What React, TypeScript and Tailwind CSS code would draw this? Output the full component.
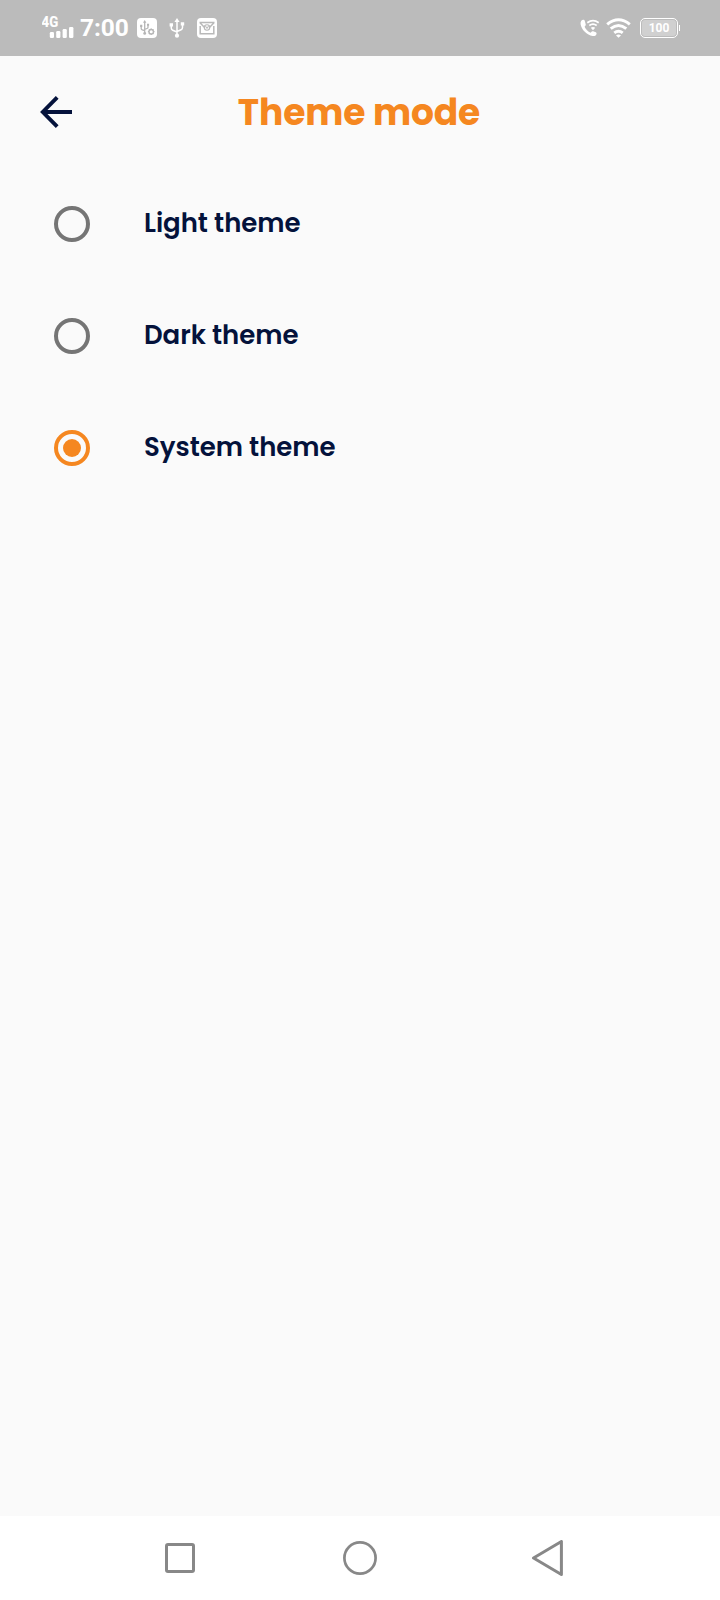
import { useState } from 'react';

function SignalIcon() {
  return (
    <svg width="34" height="56" viewBox="42 0 34 56" fill="#fff">
      <text x="41.6" y="26.8" fontFamily="Roboto, sans-serif" fontWeight="700" fontSize="14" textLength="16.6" lengthAdjust="spacingAndGlyphs" stroke="#fff" strokeWidth="0.2">4G</text>
      <rect x="49.8" y="32" width="4.2" height="6" rx="1.3" />
      <rect x="56.2" y="31" width="4.2" height="7" rx="1.3" />
      <rect x="62.6" y="29" width="4.2" height="9" rx="1.3" />
      <rect x="69" y="27" width="4.4" height="11" rx="1.3" />
    </svg>
  );
}

function UsbDebugIcon() {
  return (
    <svg width="20" height="20" viewBox="0 0 20 20" fill="none" stroke="#b5b5b5" strokeWidth="1.3">
      <rect width="20" height="20" rx="4" fill="#fff" stroke="none" />
      <path d="M7.7 4v11M4.2 8v2.5q0 1 1 1.3l2.5.8M11 7v2.2q0 1-1 1.3l-2.3.8" />
      <path d="M7.7 2 6 4.8h3.4Z" fill="#b5b5b5" stroke="none" />
      <circle cx="7.7" cy="15.4" r="1.4" fill="#b5b5b5" stroke="none" />
      <path d="M3.1 6.8h2.2v2.2H3.1zM10 5.8h2.1v2H10z" fill="#b5b5b5" stroke="none" />
      <circle cx="14.2" cy="13.7" r="2.2" />
      <path d="M14.2 10.4v1M14.2 16v1M10.9 13.7h1M16.5 13.7h1M11.9 11.4l.7.7M15.8 15.3l.7.7M16.5 11.4l-.7.7M12.6 15.3l-.7.7" />
    </svg>
  );
}

function UsbIcon() {
  return (
    <svg width="16" height="20" viewBox="0 0 16 20" fill="none" stroke="#fff" strokeWidth="1.5">
      <path d="M8 3v13M2.3 7v3q0 1.6 1.4 2.2L8 14M13.5 5v4.500q0 1.600-1.400 2.200L8 13.500" />
      <path d="M8 0 5.400 4h5.200ZM.6 5.200h3.400v3.200H.6ZM11.800 4.300h3.400v3.200h-3.400Z" fill="#fff" stroke="none" />
      <circle cx="8" cy="17.700" r="2.100" fill="#fff" stroke="none" />
    </svg>
  );
}

function MailIcon() {
  return (
    <svg width="20" height="20" viewBox="0 0 20 20" fill="none" stroke="#b9b9b9" strokeWidth="1.5">
      <rect width="20" height="20" rx="4" fill="#fff" stroke="none" />
      <path d="M3.2 8v7.800h13.600V8M2.500 4.500h15M3 4.800l4.800 5M17 4.800l-4.800 5" />
      <circle cx="10" cy="9.500" r="2.700" strokeWidth="1.100" />
      <path d="m8.200 7.500 1.800 3 1.800-3" strokeWidth="1" />
    </svg>
  );
}

function CallIcon() {
  return (
    <svg width="20" height="19" viewBox="0 0 20 19" fill="#fff">
      <path d="M3.7.8C1.7.5.2 2.8.6 5.2c.9 5.5 6.3 10.8 12 11.8 2.200.3 4-.8 4-2.600 0-.5-.3-.9-.8-1.100l-2.600-1c-.5-.2-1-.1-1.400.3l-1.200 1.200C8 12.600 5.600 10.200 4.600 7.700L5.500 6.500c.3-.4.4-.8.2-1.300L4.700 1.700C4.500 1.100 4.200.9 3.700.8Z" />
      <path d="M7.300 3.700q5.700-4.200 11.400 0M9.300 6.500q3.700-2.700 7.400 0" fill="none" stroke="#fff" strokeWidth="1.700" />
      <path d="M10.800 8.700q2.200-1.500 4.400 0l-2.200 2.500Z" />
    </svg>
  );
}

function WifiIcon() {
  return (
    <svg width="25" height="20" viewBox="0 0 25 20" fill="none" stroke="#fff" strokeWidth="3">
      <path d="M1.2 6.300q11.300-9.200 22.600 0M4.700 10.700q7.800-6.300 15.600 0M8.300 14.900q4.200-3.300 8.400 0" />
      <path d="M10 17.500q2.500-1.900 5 0l-2.500 2.300Z" fill="#fff" stroke="none" />
    </svg>
  );
}

function StatusBar() {
  return (
    <div className="flex h-14 items-center bg-[#bbbbbb] pl-[42px] pr-10 font-['Roboto',sans-serif] text-white">
      <SignalIcon />
      <span className="ml-1 w-[57px] text-[24.5px] font-bold leading-none tracking-[-0.1px]">7:00</span>
      <UsbDebugIcon />
      <span className="ml-3"><UsbIcon /></span>
      <span className="ml-3"><MailIcon /></span>
      <div className="ml-auto flex items-center">
        <CallIcon />
        <span className="ml-1.5 mr-px"><WifiIcon /></span>
        <div className="ml-2 flex h-5 w-[38px] rounded-[5px] border-[1.5px] border-white p-px">
          <div className="flex flex-1 items-center justify-center rounded-[3px] bg-[#d0d0d0] text-[12px] font-bold leading-none">100</div>
        </div>
        <div className="ml-px h-[6px] w-px bg-white" />
      </div>
    </div>
  );
}

const options = ['Light theme', 'Dark theme', 'System theme'];

export default function App() {
  const [selected, setSelected] = useState('System theme');
  return (
    <div className="flex h-[1600px] w-[720px] flex-col bg-[#fafafa] font-['Poppins','Inter',sans-serif]">
      <StatusBar />
      <header className="grid h-28 grid-cols-[112px_1fr_112px] items-center">
        <button className="pl-10" aria-label="Back">
          <svg width="34" height="34" viewBox="0 0 34 34" fill="none" stroke="#04123b" strokeWidth="3.900">
            <path d="M32 17H3M17.200 2.300 2.800 17l14.400 14.700" />
          </svg>
        </button>
        <h1 className="pr-0.5 pt-0.5 text-center text-[36px] font-bold leading-none tracking-[-0.1px] text-[#f58720]">Theme mode</h1>
      </header>
      <main className="flex-1">
        {options.map((label) => (
          <button key={label} onClick={() => setSelected(label)} className="flex h-28 w-full items-center pl-[54px]">
            <span className={`flex size-9 items-center justify-center rounded-full border-4 ${selected === label ? 'border-[#f58720]' : 'border-[#757575]'}`}>
              {selected === label && <span className="size-[18px] rounded-full bg-[#f58720]" />}
            </span>
            <span className="ml-[54px] pb-[3px] text-[26px] font-semibold leading-none tracking-[-0.03px] text-[#04123b]">{label}</span>
          </button>
        ))}
      </main>
      <nav className="grid h-[84px] grid-cols-[180px_180px_180px] justify-center bg-white">
        <div className="flex items-center justify-center">
          <svg width="36" height="36" viewBox="0 0 36 36" fill="none" stroke="#888" strokeWidth="3"><rect x="4.5" y="4.5" width="27" height="27" rx="1.5" /></svg>
        </div>
        <div className="flex items-center justify-center">
          <svg width="36" height="36" viewBox="0 0 36 36" fill="none" stroke="#888" strokeWidth="2.7"><circle cx="18" cy="18" r="15.6" /></svg>
        </div>
        <div className="flex items-center justify-center pl-4">
          <svg width="36" height="36" viewBox="0 0 36 36" fill="none" stroke="#888" strokeWidth="3" strokeLinejoin="round"><path d="M31.4 1.5v33L3.5 18Z" /></svg>
        </div>
      </nav>
    </div>
  );
}
